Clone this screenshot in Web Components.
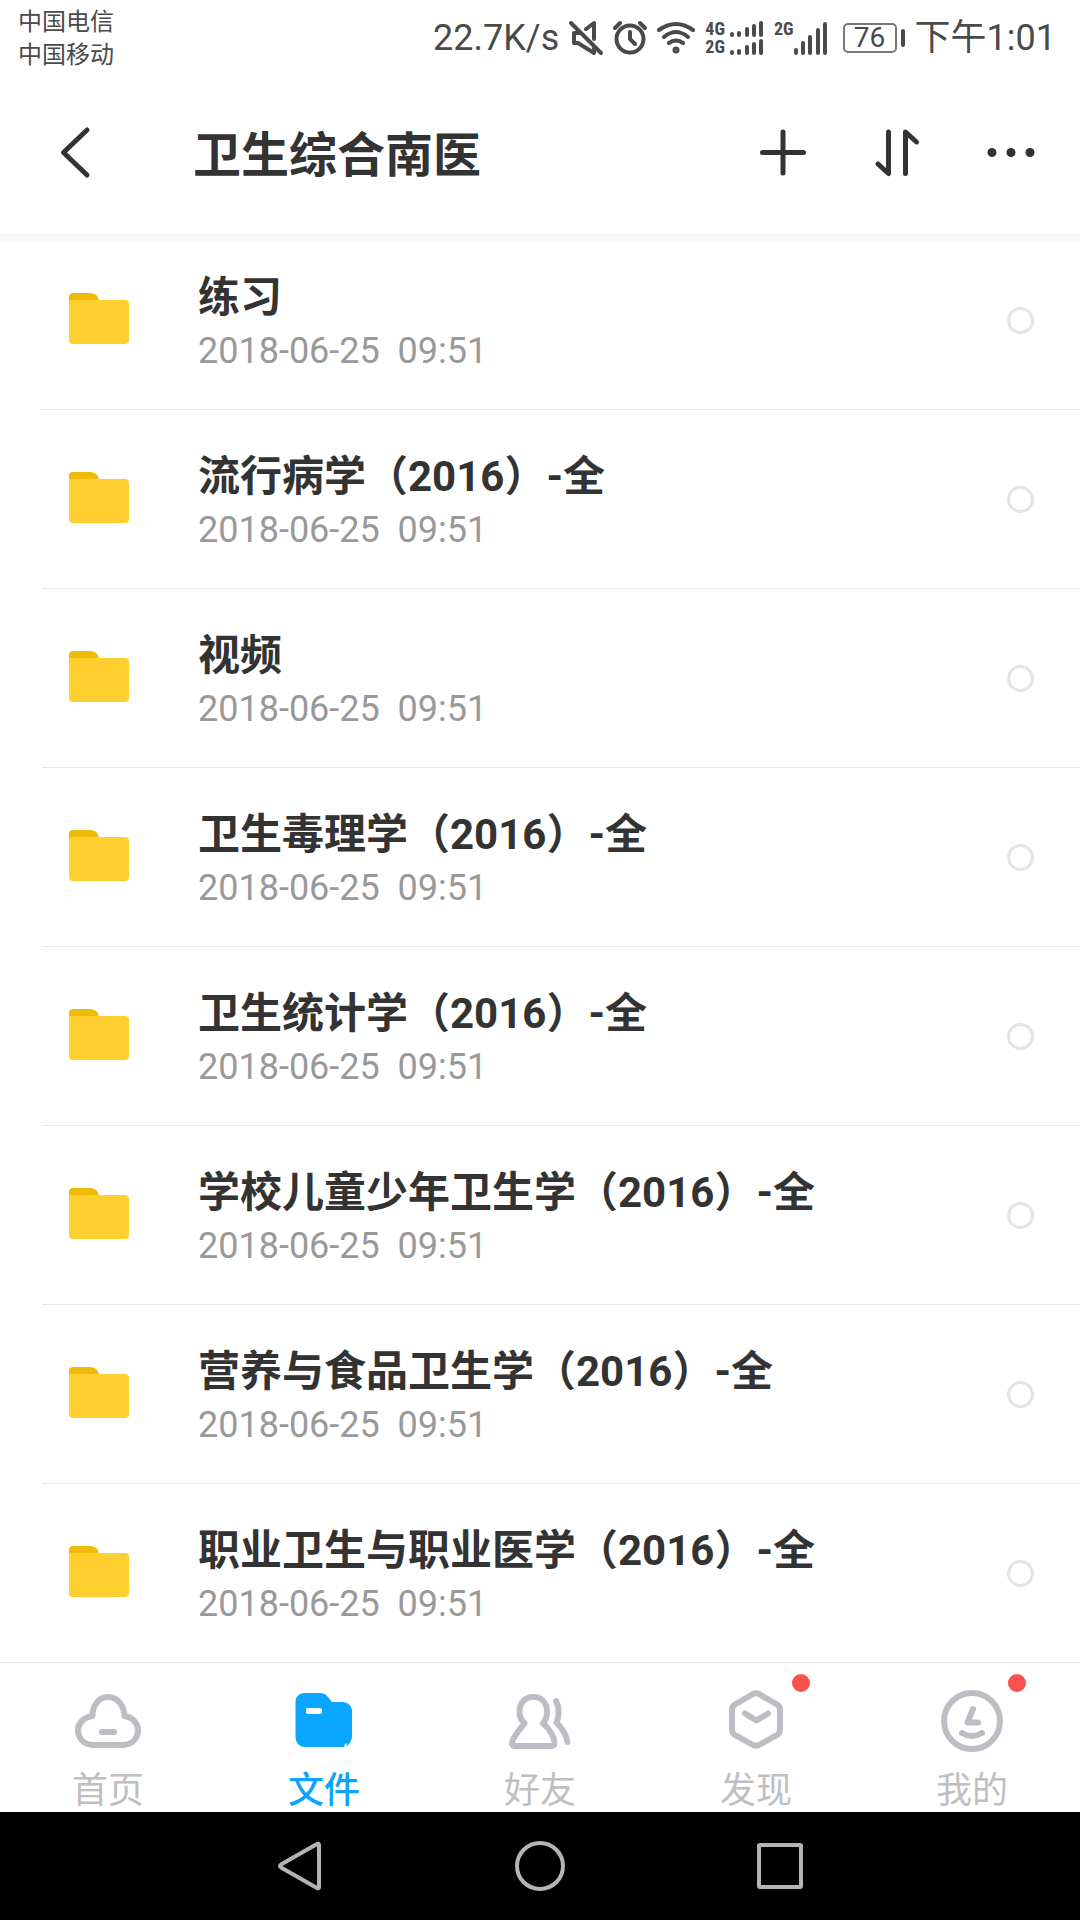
<!DOCTYPE html>
<html lang="zh-CN">
<head>
<meta charset="utf-8">
<meta name="viewport" content="width=device-width, initial-scale=1">
<title>卫生综合南医</title>
<style>
  body { margin: 0; background: #fff; color: #333; font-family: Roboto, "Noto Sans CJK SC", sans-serif; }
</style>
</head>
<body>
<drive-app></drive-app>
<script>
const define = (name, html, init) => {
  const template = document.createElement('template');
  template.innerHTML = html;
  customElements.define(name, class extends HTMLElement {
    constructor() {
      super();
      this.attachShadow({ mode: 'open' }).append(template.content.cloneNode(true));
    }
    connectedCallback() { if (init) init(this, this.shadowRoot); }
  });
};

define('status-bar', `
<style>
  :host { display: flex; align-items: center; justify-content: space-between; height: 76px; padding: 0 24px 0 18px; box-sizing: border-box; color: #4a4a4a; }
  .carriers { padding-top: 2px; font-size: 24px; line-height: 33px; }
  .right { display: flex; align-items: center; gap: 10px; font-size: 36px; line-height: 44px; }
  .right svg { display: block; fill: none; stroke: currentColor; stroke-width: 4; stroke-linecap: round; stroke-linejoin: round; }
  .net { display: flex; gap: 4px; }
  .gen { font: bold 18px/18px "Roboto Condensed", "Liberation Sans Narrow", "Liberation Sans", sans-serif; }
  .solo { gap: 0; }
  .battery { display: flex; align-items: center; gap: 4px; margin-left: 5px; }
  .level { box-sizing: border-box; width: 54px; height: 30px; border: 2px solid #777; border-radius: 5px; font-size: 28px; line-height: 26px; text-align: center; }
  .nub { width: 4px; height: 18px; border-radius: 2px; background: currentColor; }
</style>
<div class="carriers"><div>中国电信</div><div>中国移动</div></div>
<div class="right">
  <span>22.7K/s</span>
  <svg width="34" height="36" viewBox="0 0 34 36"><path d="M2 3 32 33M17 9 25 3V19M12 13H5V23H9L25 33V28"/></svg>
  <svg width="34" height="36" viewBox="0 0 34 36"><circle cx="17" cy="19" r="13.5"/><path d="M17 12V19L22 24M2 8 7 3M32 8 27 3"/></svg>
  <svg width="38" height="36" viewBox="0 0 38 36"><path d="M2 10Q19-2 36 10M7 17Q19 7 31 17M12 23Q19 18 26 23"/><circle cx="19" cy="30" r="1.5"/></svg>
  <div class="net">
    <div class="gen"><div>4G</div><div>2G</div></div>
    <svg width="35" height="36" viewBox="0 0 35 36"><path d="M3 14V15M10 13V15M18 9V15M25 6V15M32 3V15M3 32V33M10 31V33M18 27V33M25 24V33M32 21V33"/></svg>
  </div>
  <div class="net solo">
    <div class="gen">2G</div>
    <svg width="34" height="36" viewBox="0 0 34 36"><path d="M2 30V33M9 23V33M16 17V33M24 10V33M31 4V33"/></svg>
  </div>
  <div class="battery"><div class="level">76</div><div class="nub"></div></div>
  <span>下午1:01</span>
</div>`);

define('title-bar', `
<style>
  :host { display: flex; align-items: center; position: relative; height: 155px; padding: 0 39px 0 46px; box-sizing: border-box; }
  :host::after { content: ""; position: absolute; left: 0; right: 0; top: 158px; height: 9px; background: linear-gradient(#f7f7f7, #f8f8f8 60%, #fefefe); }
  h1 { flex: 1; margin: 0 0 0 87px; padding-top: 4px; font-size: 48px; line-height: 60px; font-weight: bold; }
  button { display: block; padding: 0; border: 0; background: none; color: #333; }
  .actions { display: flex; gap: 54px; }
  svg { display: block; fill: none; stroke: currentColor; stroke-width: 5; stroke-linecap: round; stroke-linejoin: round; }
</style>
<button aria-label="返回"><svg width="60" height="60" viewBox="0 0 60 60"><path d="M41 6 17.500 28.500 41 51"/></svg></button>
<h1><slot></slot></h1>
<div class="actions">
  <button aria-label="新建"><svg width="60" height="60" viewBox="0 0 60 60"><path d="M30 8V49M9.500 28.500H50.500"/></svg></button>
  <button aria-label="排序"><svg width="60" height="60" viewBox="0 0 60 60"><path d="M11 40 21.500 49.500V8M38.500 49.500V8L49.500 18"/></svg></button>
  <button aria-label="更多"><svg width="60" height="60" viewBox="0 0 60 60"><g fill="currentColor" stroke="none"><circle cx="11" cy="28.500" r="4.500"/><circle cx="30" cy="28.500" r="4.500"/><circle cx="49" cy="28.500" r="4.500"/></g></svg></button>
</div>`);

define('file-row', `
<style>
  :host { display: flex; align-items: center; box-sizing: border-box; height: 179px; margin-left: 42px; padding: 0 46px 0 27px; border-bottom: 1px solid #e8e8e8; }
  :host(:last-of-type) { height: 178px; border-bottom: 0; }
  a { flex: 1; display: flex; align-items: center; gap: 69px; color: inherit; text-decoration: none; }
  svg { display: block; flex: none; }
  .text { padding-top: 6px; display: flex; flex-direction: column; gap: 4px; }
  .name { font-size: 42px; line-height: 52px; font-weight: bold; }
  .date { font-size: 36px; line-height: 46px; color: #999; white-space: pre; }
  input { appearance: none; flex: none; width: 27px; height: 27px; margin: 0; border: 3px solid #e4e4e4; border-radius: 50%; }
</style>
<a href="#">
  <svg width="60" height="54" viewBox="0 0 60 54"><path fill="#f0ba08" d="M0 12V4Q0 0 4 0H22Q30 1 30 9V12Z"/><path fill="#ffcf30" d="M0 7H56Q60 7 60 11V47Q60 51 56 51H4Q0 51 0 47Z"/></svg>
  <div class="text"><div class="name"><slot></slot></div><div class="date">2018-06-25  09:51</div></div>
</a>
<input type="checkbox" aria-label="选择">`);

define('tab-item', `
<style>
  :host { flex: 1; }
  a { display: flex; flex-direction: column; align-items: center; gap: 12px; padding-top: 22px; color: #bcbec3; text-decoration: none; }
  .icon { position: relative; width: 72px; height: 72px; }
  .label { font-size: 36px; line-height: 44px; color: #bfbfc1; }
  :host([active]) a, :host([active]) .label { color: #09a5ff; }
  :host([active]) .label { font-weight: 500; }
  :host([badge]) .icon::after { content: ""; position: absolute; left: 72px; top: -11px; width: 18px; height: 18px; border-radius: 50%; background: #f9514d; }
</style>
<a href="#"><div class="icon"><slot name="icon"></slot></div><div class="label"><slot></slot></div></a>`);

define('tab-bar', `
<style>
  :host { display: flex; height: 150px; box-sizing: border-box; border-top: 1px solid #e3e3e3; }
  svg { display: block; fill: none; stroke: currentColor; stroke-width: 6; stroke-linecap: round; stroke-linejoin: round; }
</style>
<tab-item><svg slot="icon" width="72" height="72" viewBox="0 0 72 72"><path d="M20.500 31C20.500 20 27 12 36 12S52 20 52.500 31C60 32 66 38 66 45C66 53 60 60 51 60H21C12 60 6 53 6 45C6 38 12 32 20.500 31ZM30 47H42"/></svg>首页</tab-item>
<tab-item active><svg slot="icon" width="72" height="72" viewBox="0 0 72 72"><g stroke="none"><path fill="currentColor" d="M17 8H32C37 8 39 11 40 12L44 17H54C60 17 64 21 64 26V52C64 54 62 58 59 62H17C11 62 7.500 57 7.500 52V17C7.500 12 11 8 17 8Z"/><rect x="18" y="23" width="16" height="6" rx="2" fill="#fff"/><path fill="#fff" d="M56 62 57 59 59 58 58 61 60 60 62 59 60 63Z"/></g></svg>文件</tab-item>
<tab-item><svg slot="icon" width="72" height="72" viewBox="0 0 72 72"><path d="M20.500 38.500C17 35 15.500 31 15.500 27C15.500 18 21 12 29.500 12S43 18 43 27C43 31 42 35 39 38.500C46 44 50 52 50.500 57Q51 61 48 61H11Q7 61 8.500 56C10 51 15 45 20.500 38.500ZM52 16C55.500 22 55.500 31 52.500 37.500C58 43 62 49 63.500 57"/></svg>好友</tab-item>
<tab-item badge><svg slot="icon" width="72" height="72" viewBox="0 0 72 72"><path d="M33 9Q36 7.500 39 9L57 19.500Q60 21 60 25V44Q60 48 57 50L39 60Q36 61.500 33 60L15 50Q12 48 12 44V25Q12 21 15 19.500ZM25 28.500 36.500 35.500 48 28.500"/></svg>发现</tab-item>
<tab-item badge><svg slot="icon" width="72" height="72" viewBox="0 0 72 72"><circle cx="36" cy="36" r="28"/><path d="M37 24 31.500 37.500H42M26 48Q36 54 46 48"/></svg>我的</tab-item>`);

define('system-nav', `
<style>
  :host { display: flex; justify-content: center; height: 108px; background: #000; }
  button { width: 22.222%; padding: 0; border: 0; background: none; color: #b4b4b4; display: flex; align-items: center; justify-content: center; }
  svg { fill: none; stroke: currentColor; stroke-width: 4; stroke-linejoin: round; }
</style>
<button aria-label="后退"><svg width="54" height="54" viewBox="0 0 54 54"><path d="M8 25.500Q6 27 8 28.500L44 49Q46 50 46 48V6Q46 4 44 5Z"/></svg></button>
<button aria-label="主屏幕"><svg width="54" height="54" viewBox="0 0 54 54"><circle cx="27" cy="27" r="23"/></svg></button>
<button aria-label="最近任务"><svg width="54" height="54" viewBox="0 0 54 54"><rect x="6" y="6" width="42" height="42" rx="1"/></svg></button>`);

define('drive-app', `
<style>
  :host { display: flex; flex-direction: column; min-height: 100vh; }
  main { flex: 1; }
</style>
<status-bar></status-bar>
<title-bar>卫生综合南医</title-bar>
<main>
  <file-row>练习</file-row>
  <file-row>流行病学（2016）-全</file-row>
  <file-row>视频</file-row>
  <file-row>卫生毒理学（2016）-全</file-row>
  <file-row>卫生统计学（2016）-全</file-row>
  <file-row>学校儿童少年卫生学（2016）-全</file-row>
  <file-row>营养与食品卫生学（2016）-全</file-row>
  <file-row>职业卫生与职业医学（2016）-全</file-row>
</main>
<tab-bar></tab-bar>
<system-nav></system-nav>`);
</script>
</body>
</html>
